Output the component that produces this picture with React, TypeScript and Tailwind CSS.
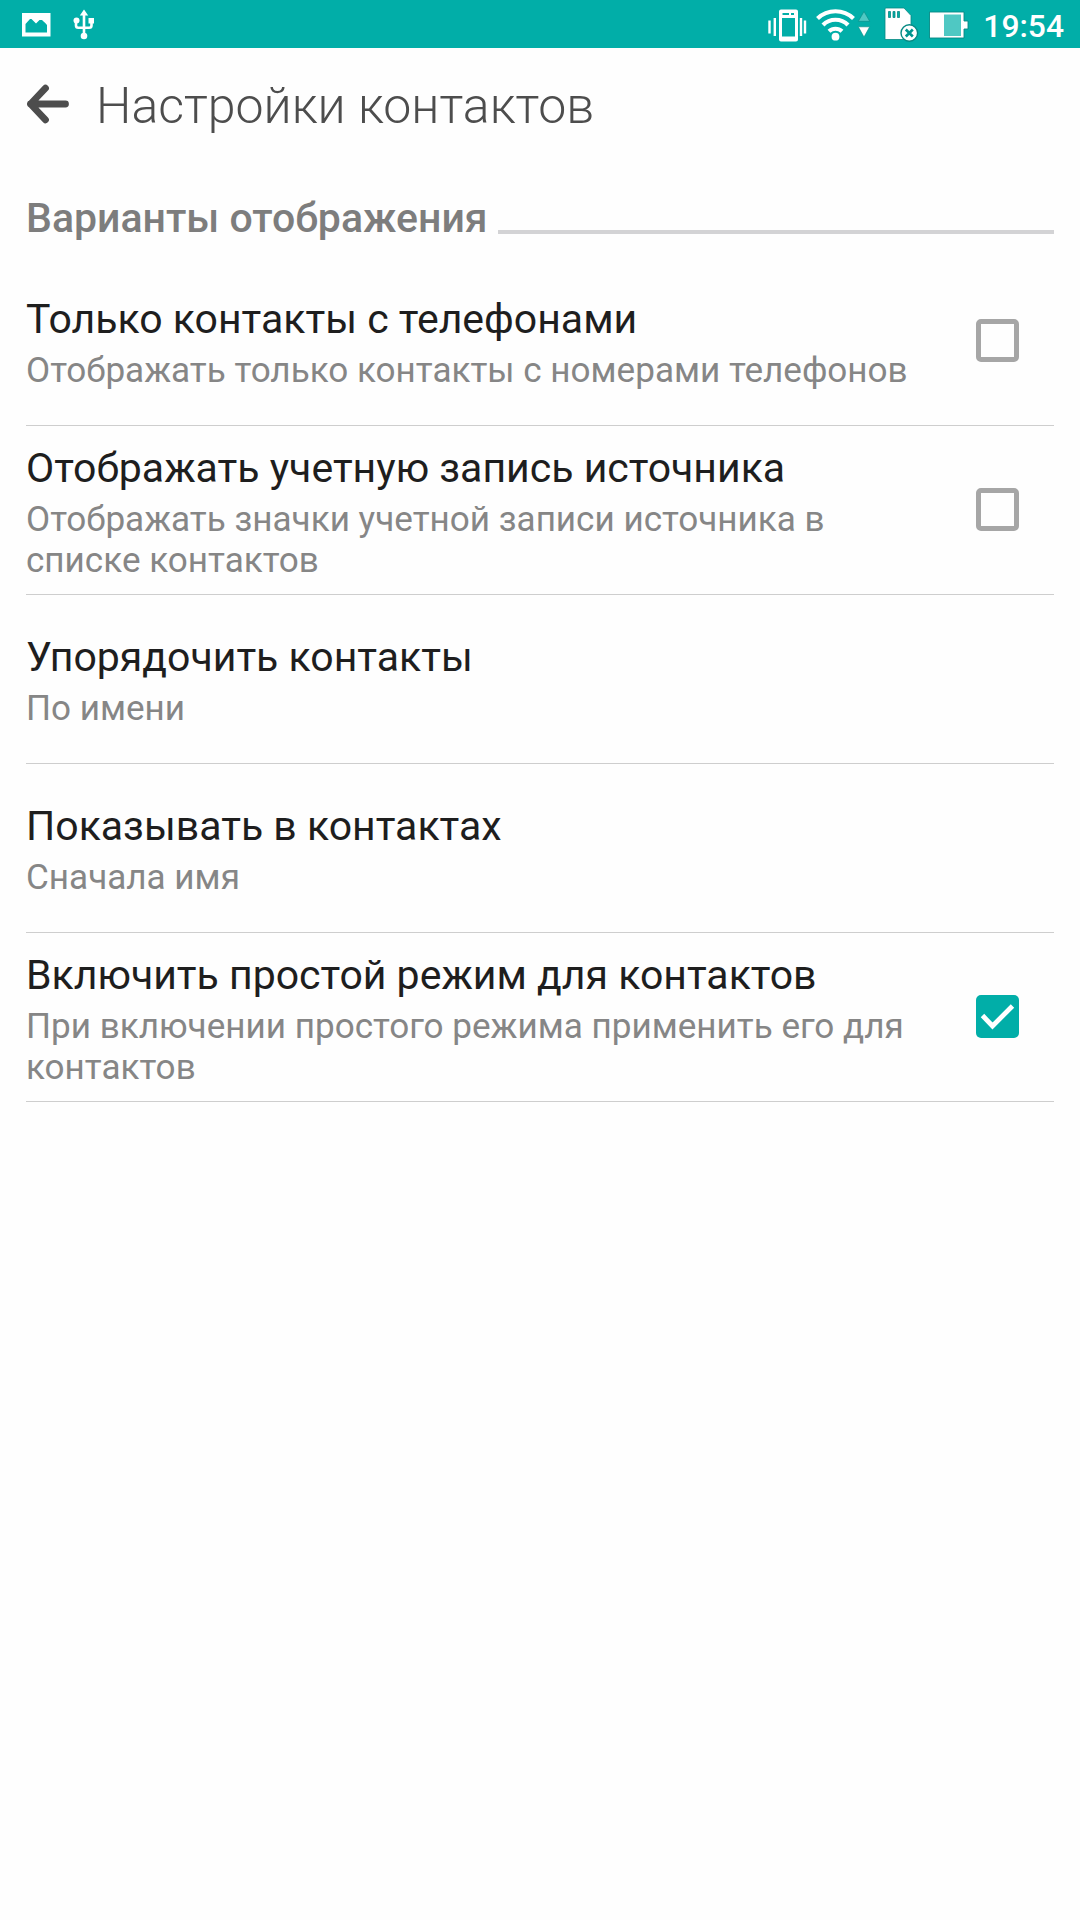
import { useState } from 'react';
import clsx from 'clsx';

type Setting = {
  id: string;
  title: string;
  summary: string;
  checkable?: boolean;
};

const settings: Setting[] = [
  {
    id: 'phones',
    title: 'Только контакты с телефонами',
    summary: 'Отображать только контакты с номерами телефонов',
    checkable: true,
  },
  {
    id: 'account',
    title: 'Отображать учетную запись источника',
    summary: 'Отображать значки учетной записи источника в списке контактов',
    checkable: true,
  },
  { id: 'sort', title: 'Упорядочить контакты', summary: 'По имени' },
  { id: 'display', title: 'Показывать в контактах', summary: 'Сначала имя' },
  {
    id: 'easy',
    title: 'Включить простой режим для контактов',
    summary: 'При включении простого режима применить его для контактов',
    checkable: true,
  },
];

function NotificationIcons() {
  return (
    <svg width="120" height="48" viewBox="0 0 120 48" fill="none">
      {/* picture */}
      <path
        fillRule="evenodd"
        fill="#fff"
        d="M22 13h28.500v23.500H22zM25.500 32.500h21.500v-7.500q-1-1.500-5-5l-2.500 0-3.500 3.500-4.500-4.500h-1.500l-4.500 5z"
      />
      {/* usb */}
      <path d="M84 14v22M76 21v4.500q0 2.300 2.300 2.300H89.200q2.300 0 2.300-2.300V21" stroke="#fff" strokeWidth="2.600" />
      <path d="M84 9.500l4.200 6h-8.400z" fill="#fff" />
      <circle cx="76.500" cy="20.500" r="3" fill="#fff" />
      <path d="M88.500 18h5.500v5.500h-5.500z" fill="#fff" />
      <circle cx="84" cy="36" r="3.300" fill="#fff" />
    </svg>
  );
}

function SystemIcons() {
  return (
    <svg width="215" height="48" viewBox="755 0 215 48" fill="none">
      {/* vibrate */}
      <path
        fillRule="evenodd"
        fill="#fff"
        d="M781 9.500h15q2 0 2 2v28q0 2-2 2h-15q-2 0-2-2v-28q0-2 2-2zM782 18v18.500h13V18zM782.500 13v2h6.500v-2zM791 13v2h3v-2z"
      />
      <path d="M769.500 20.500v13M774.800 18v18M801 18v18M805 20.500v13" stroke="#fff" strokeWidth="2.400" />

      {/* wifi */}
      <g stroke="#fff" strokeWidth="4.200">
        <path d="M817.500 18.500a26 26 0 0 1 36 0" />
        <path d="M823 25a17.500 17.500 0 0 1 25 0" />
        <path d="M829 31.300a9.500 9.500 0 0 1 13 0" />
      </g>
      <circle cx="835.500" cy="36.700" r="3.900" fill="#fff" />
      <path d="M864 11.500l5.700 9.800h-11.400z" fill="#4fc8c3" stroke="#078983" strokeWidth="0.600" />
      <path d="M858.300 26.800h11.400l-5.700 10.200z" fill="#fff" stroke="#078983" strokeWidth="0.600" />

      {/* sd card */}
      <path
        fillRule="evenodd"
        fill="#fff"
        stroke="#078983"
        strokeWidth="0.800"
        d="M886 8h18l7 7.500V39.500h-26V9q0-1 1-1zM888.500 11.500v6h2v-6zM893 11.500v6h2v-6zM897.500 11.500v6h2v-6z"
      />
      <circle cx="909.300" cy="33" r="8.300" fill="#fff" stroke="#078983" strokeWidth="1.400" />
      <path d="M905.800 29.500l7 7M912.800 29.500l-7 7" stroke="#01958f" strokeWidth="2.600" />

      {/* battery */}
      <path d="M929.500 12h34.500v9h4v8h-4v9h-34.500z" fill="#fff" stroke="#078983" strokeWidth="0.900" />
      <path d="M944 14.500h17v21.500h-17z" fill="#4fc8c3" />
    </svg>
  );
}

function StatusBar() {
  return (
    <div className="flex h-12 items-center justify-between bg-[#01aea8]">
      <NotificationIcons />
      <div className="flex items-center pr-4">
        <SystemIcons />
        <span className="w-[94px] pt-[4px] text-right text-[31.800px] leading-[44px] font-medium text-white">19:54</span>
      </div>
    </div>
  );
}

function Checkbox({ checked, onClick }: { checked: boolean; onClick: () => void }) {
  return (
    <button
      role="checkbox"
      aria-checked={checked}
      onClick={onClick}
      className={clsx(
        'mr-[35px] mb-px size-[43px] rounded-[5px]',
        checked ? 'bg-[#01aea8]' : 'border-[5px] border-[#a6a6a6]'
      )}
    >
      {checked && (
        <svg width="43" height="43" viewBox="0 0 43 43" fill="none">
          <path d="M6.500 20.500l10 10.500L36.500 11" stroke="#fff" strokeWidth="4.800" />
        </svg>
      )}
    </button>
  );
}

export default function App() {
  const [checked, setChecked] = useState<Record<string, boolean>>({ easy: true });

  const toggle = (id: string) => setChecked((prev) => ({ ...prev, [id]: !prev[id] }));

  return (
    <div className="min-h-[1920px] w-[1080px] bg-[#fefefe] font-['Roboto',sans-serif]">
      <StatusBar />

      <header className="flex h-[112px] items-center px-[26px]">
        <svg width="44" height="40" viewBox="0 0 44 40" fill="none">
          <path
            d="M19.500 4.200L4.500 20l15 15.800M4.500 20h35"
            stroke="#4d4d4d"
            strokeWidth="6.800"
            strokeLinecap="round"
            strokeLinejoin="round"
          />
        </svg>
        <h1 className="mt-1 ml-[26px] text-[50px] leading-[60px] font-light text-[#4d4d4d]">Настройки контактов</h1>
      </header>

      <main className="px-[26px]">
        <div className="flex h-[97px] items-center">
          <h2 className="mt-[18px] text-[41px] leading-[48px] font-medium text-[#7d7d7d]">Варианты отображения</h2>
          <div className="mt-[46px] ml-[10px] h-1 flex-1 bg-[#d3d3d5]" />
        </div>

        {settings.map(({ id, title, summary, checkable }) => (
          <div key={id} className="flex h-[169px] items-center justify-between border-b border-[#cecece]">
            <div className="w-[890px] pt-1">
              <h3 className="text-[41px] leading-[49px] text-[#1e1e1e]">{title}</h3>
              <p className="mt-1.5 text-[35.1px] leading-[41px] text-[#868686]">{summary}</p>
            </div>
            {checkable && <Checkbox checked={!!checked[id]} onClick={() => toggle(id)} />}
          </div>
        ))}
      </main>
    </div>
  );
}
